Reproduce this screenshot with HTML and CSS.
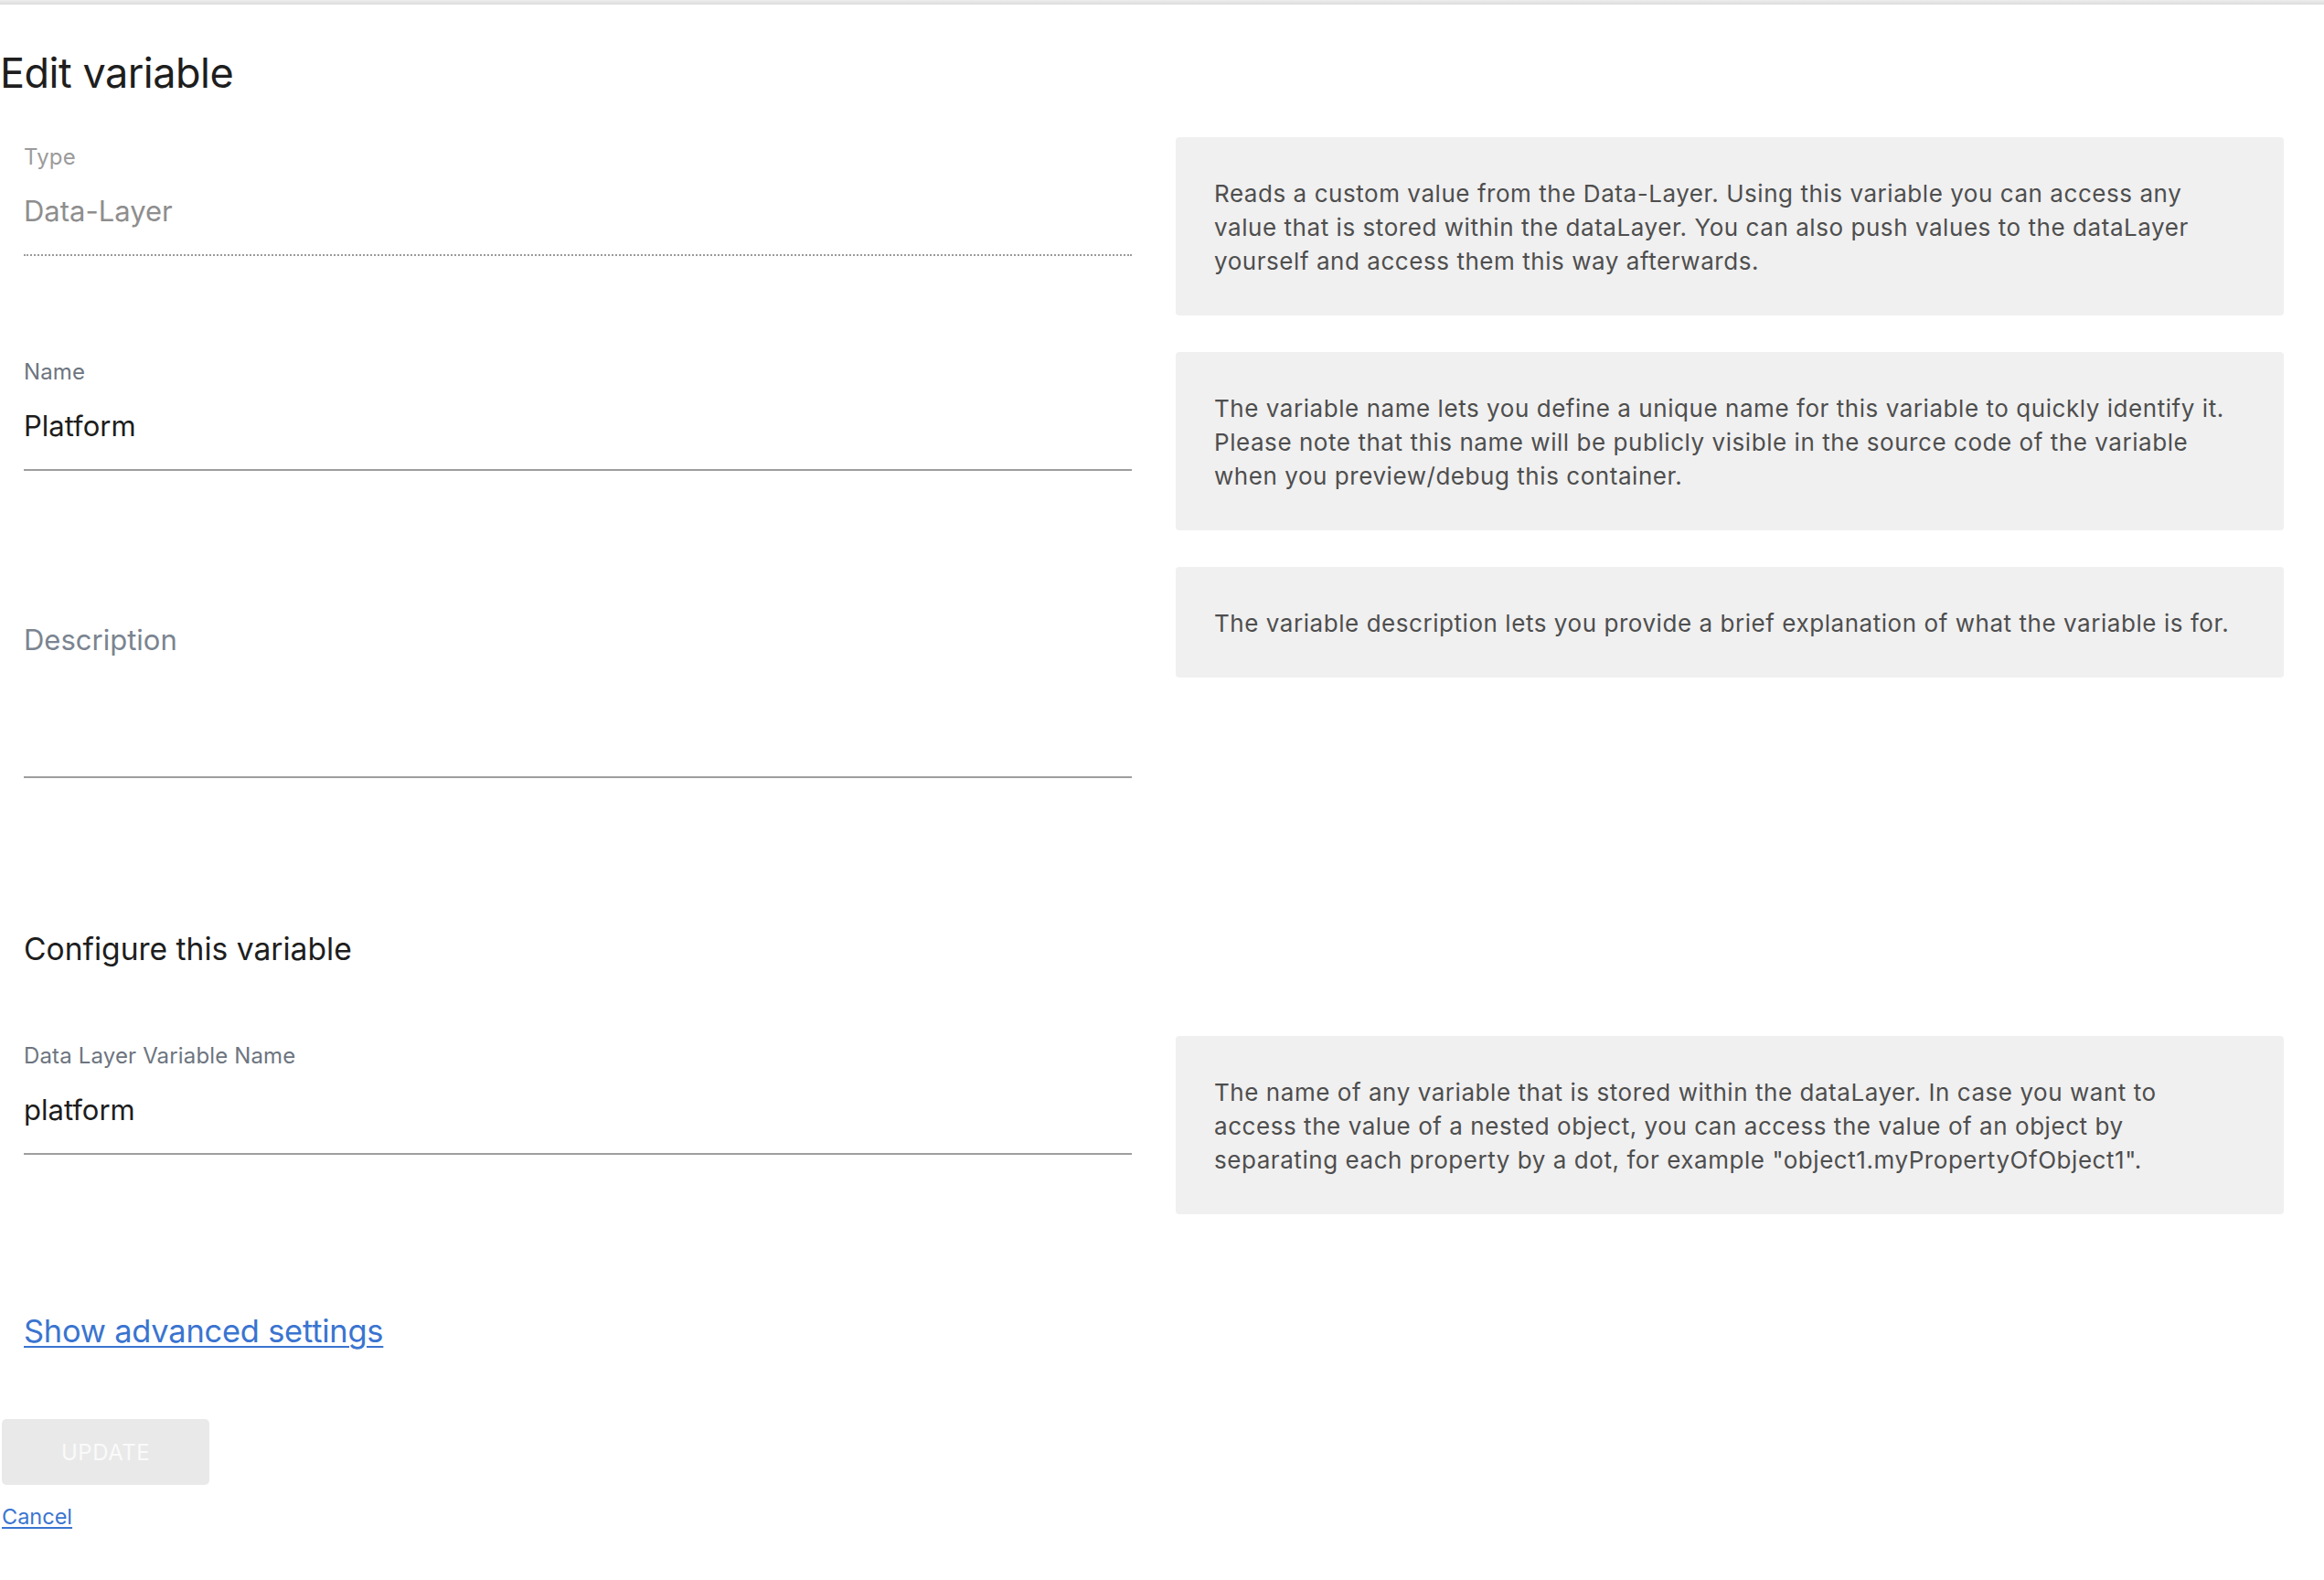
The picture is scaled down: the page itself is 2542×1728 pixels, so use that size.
FILE: index.html
```html
<!DOCTYPE html>
<html lang="en">
<head>
<meta charset="utf-8">
<title>Edit variable</title>
<link rel="stylesheet" href="styles.css">
</head>
<body>
<div class="topbar"></div>
<main class="page">
  <h1 class="page-title">Edit variable</h1>

  <form class="form">
    <section class="grid">
      <div class="field">
        <label class="field-label field-label--disabled" for="type">Type</label>
        <input class="field-input field-input--disabled" id="type" type="text" value="Data-Layer" disabled>
      </div>
      <div class="help-box">Reads a custom value from the Data-Layer. Using this variable you can access any value that is stored within the dataLayer. You can also push values to the dataLayer yourself and access them this way afterwards.</div>

      <div class="field">
        <label class="field-label" for="name">Name</label>
        <input class="field-input" id="name" type="text" value="Platform">
      </div>
      <div class="help-box">The variable name lets you define a unique name for this variable to quickly identify it. Please note that this name will be publicly visible in the source code of the variable when you preview/debug this container.</div>

      <div class="field field--textarea">
        <label class="field-label field-label--placeholder" for="description">Description</label>
        <textarea class="field-input field-textarea" id="description"></textarea>
      </div>
      <div class="help-box">The variable description lets you provide a brief explanation of what the variable is for.</div>
    </section>

    <h2 class="section-title">Configure this variable</h2>

    <section class="grid">
      <div class="field">
        <label class="field-label" for="dlname">Data Layer Variable Name</label>
        <input class="field-input" id="dlname" type="text" value="platform">
      </div>
      <div class="help-box">The name of any variable that is stored within the dataLayer. In case you want to access the value of a nested object, you can access the value of an object by separating each property by a dot, for example "object1.myPropertyOfObject1".</div>
    </section>

    <a class="advanced-link" href="#">Show advanced settings</a>

    <div class="actions">
      <button class="btn-update" type="button" disabled>UPDATE</button>
      <a class="cancel-link" href="#">Cancel</a>
    </div>
  </form>
</main>
</body>
</html>
```

FILE: styles.css
```css
* {
  box-sizing: border-box;
}

html, body {
  margin: 0;
  padding: 0;
  background: #ffffff;
}

body {
  font-family: "Inter", "Liberation Sans", sans-serif;
  color: #212121;
}

.topbar {
  height: 5px;
  background: linear-gradient(#ededed, #dcdcdc);
}

.page {
  padding: 0;
}

.page-title {
  margin: 47px 0 42px 0;
  font-size: 45px;
  line-height: 56px;
  font-weight: 400;
  color: #1e1e1e;
  letter-spacing: -0.5px;
}

.form {
  display: flex;
  flex-direction: column;
  align-items: flex-start;
}

.grid {
  align-self: stretch;
  display: grid;
  grid-template-columns: 1fr 1fr;
  column-gap: 48px;
  row-gap: 40px;
  align-items: start;
  padding: 0 44px 0 26px;
}

.field {
  position: relative;
  display: flex;
  flex-direction: column;
}

.field-label {
  display: block;
  padding-top: 2px;
  font-size: 24px;
  line-height: 40px;
  height: 42px;
  color: #6d7580;
  letter-spacing: 0.15px;
}

.field-label--disabled {
  color: #9b9b9b;
}

.field-label--placeholder {
  position: absolute;
  left: 0;
  top: 56px;
  padding-top: 0;
  font-size: 31px;
  line-height: 48px;
  height: 48px;
  color: #7b8490;
  letter-spacing: 0;
  pointer-events: none;
}

.field--textarea {
  padding-top: 42px;
}

.field-input {
  display: block;
  width: 100%;
  margin: 12px 0 0 0;
  padding: 2px 0 24px 0;
  height: 76px;
  border: 0;
  border-bottom: 2px solid #9e9e9e;
  border-radius: 0;
  background: transparent;
  font-family: inherit;
  font-size: 31px;
  line-height: 48px;
  color: #1d1d1d;
  outline: none;
}

.field-input--disabled {
  color: #8e8e8e;
  border-bottom: 2px dotted #9a9a9a;
  -webkit-text-fill-color: #8e8e8e;
  opacity: 1;
}

.field-textarea {
  height: 177px;
  padding-top: 0;
  resize: none;
}

.help-box {
  background: #f0f0f0;
  border-radius: 4px;
  padding: 43px 48px 41px 42px;
  font-size: 26px;
  line-height: 37px;
  letter-spacing: 0.55px;
  color: #4e4e4e;
}

.section-title {
  margin: 165px 0 73px 26px;
  font-size: 33.6px;
  line-height: 44px;
  font-weight: 400;
  color: #1e1e1e;
  letter-spacing: 0;
}

.advanced-link {
  margin: 104px 0 0 26px;
  font-size: 34.4px;
  line-height: 48px;
  color: #3a74d0;
  text-decoration: underline;
  text-decoration-thickness: 2px;
  text-underline-offset: 4px;
  letter-spacing: -0.2px;
}

.actions {
  display: flex;
  flex-direction: column;
  align-items: flex-start;
  margin: 72px 0 0 2px;
}

.btn-update {
  width: 227px;
  height: 72px;
  border: 0;
  border-radius: 5px;
  background: #e9e9e9;
  color: #fafafa;
  font-family: inherit;
  font-size: 24px;
  letter-spacing: 0.5px;
  padding: 0;
}

.cancel-link {
  margin-top: 19px;
  font-size: 23.5px;
  line-height: 32px;
  color: #3a74d0;
  text-decoration: underline;
  text-decoration-thickness: 2px;
  text-underline-offset: 3px;
}
```
